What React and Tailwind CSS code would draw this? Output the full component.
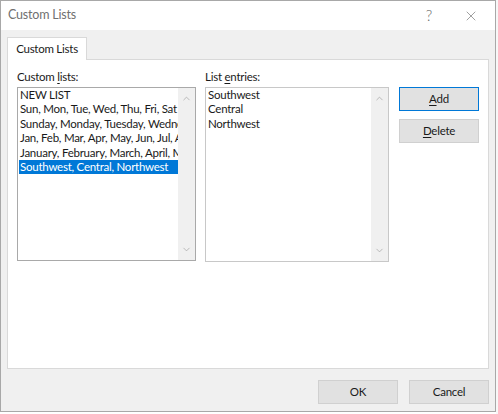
import { ChevronUp, ChevronDown, X } from "lucide-react";

const font = { fontFamily: '"Segoe UI", Lato, "Noto Sans", sans-serif' };

const LISTS = [
  "NEW LIST",
  "Sun, Mon, Tue, Wed, Thu, Fri, Sat",
  "Sunday, Monday, Tuesday, Wednesday, Thursday, Friday, Saturday",
  "Jan, Feb, Mar, Apr, May, Jun, Jul, Aug, Sep, Oct, Nov, Dec",
  "January, February, March, April, May, June, July",
  "Southwest, Central, Northwest",
];

const ENTRIES = ["Southwest", "Central", "Northwest"];

function ScrollBar() {
  return (
    <div className="w-[17px] shrink-0 bg-[#f0f0f0] flex flex-col items-center justify-between py-[5px]">
      <ChevronUp size={11} strokeWidth={1.5} className="text-[#a0a0a0]" />
      <ChevronDown size={11} strokeWidth={1.5} className="text-[#a0a0a0]" />
    </div>
  );
}

function Button({ children, primary, className = "" }) {
  return (
    <button
      className={`h-[24px] w-[80px] bg-[#e1e1e1] text-[11.5px] tracking-[-0.25px] text-[#1a1a1a] border ${
        primary ? "border-[#0078d7]" : "border-[#d0d0d0]"
      } ${className}`}
    >
      {children}
    </button>
  );
}

export default function App() {
  return (
    <div className="w-[498px] h-[414px] flex bg-white" style={font}>
      <div className="w-[496px] h-[412px] flex flex-col border border-[#a8a8a8] bg-[#f0f0f0]">
        {/* title bar */}
        <div className="h-[29px] shrink-0 bg-white flex items-center pl-[7px] text-[12.5px] tracking-[-0.2px] text-[#707070]">
          <span className="flex-1">Custom Lists</span>
          <span className="w-[40px] text-center text-[15px] font-light text-[#6a6a6a]">?</span>
          <div className="w-[44px] flex justify-center mr-[2px]">
            <X size={16} strokeWidth={1} className="text-[#707070]" />
          </div>
        </div>

        {/* tabs */}
        <div className="px-[6px] pt-[7px] flex flex-col">
          <div className="flex">
            <div className="h-[23px] w-[80px] bg-white border border-b-0 border-[#d9d9d9] flex items-center justify-center text-[11.5px] tracking-[-0.25px] text-[#1a1a1a] relative z-10">
              Custom Lists
            </div>
          </div>
          <div className="h-[310px] -mt-px bg-white border border-[#d9d9d9] flex gap-[9px] px-[9px] pt-[9px] text-[11.5px] tracking-[-0.25px] text-[#1a1a1a]">
            <div className="flex flex-col w-[179px]">
              <div className="h-[18px] leading-[15px]">
                Custom <span className="underline underline-offset-2">l</span>ists:
              </div>
              <div className="h-[174px] border border-[#a9a9a9] flex">
                <div className="flex-1 overflow-hidden pl-px">
                  {LISTS.map((l, i) => (
                    <div
                      key={l}
                      className={`h-[14.4px] leading-[14.4px] px-[1px] whitespace-nowrap overflow-hidden ${
                        i === LISTS.length - 1 ? "bg-[#0078d7] text-white" : ""
                      }`}
                    >
                      {l}
                    </div>
                  ))}
                </div>
                <ScrollBar />
              </div>
            </div>
            <div className="flex flex-col w-[186px]">
              <div className="h-[18px] leading-[15px]">
                List <span className="underline underline-offset-2">e</span>ntries:
              </div>
              <div className="h-[175px] border border-[#c8c8c8] flex">
                <div className="flex-1 overflow-hidden pl-[2px]">
                  {ENTRIES.map((e) => (
                    <div key={e} className="h-[14.4px] leading-[14.4px]">
                      {e}
                    </div>
                  ))}
                </div>
                <ScrollBar />
              </div>
            </div>
            <div className="flex flex-col gap-[8px] pt-[18px] pl-[1px]">
              <Button primary>
                <span className="underline underline-offset-2">A</span>dd
              </Button>
              <Button>
                <span className="underline underline-offset-2">D</span>elete
              </Button>
            </div>
          </div>
        </div>

        {/* footer */}
        <div className="flex justify-end gap-[11px] pr-[6px] pt-[11px]">
          <Button className="w-[78px]">OK</Button>
          <Button className="w-[78px]">Cancel</Button>
        </div>
      </div>
      <div className="flex-1 bg-[#f7f7f7]" />
    </div>
  );
}
